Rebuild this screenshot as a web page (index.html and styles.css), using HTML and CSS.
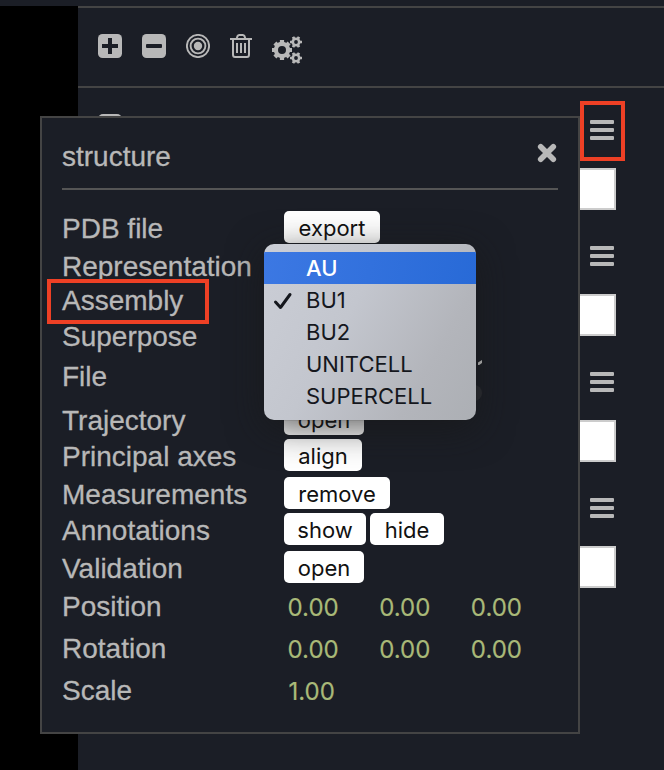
FILE: index.html
```html
<!DOCTYPE html>
<html lang="en">
<head>
<meta charset="utf-8">
<title>Structure</title>
<link rel="stylesheet" href="styles.css">
</head>
<body>
<header class="topbar"></header>
<main class="workspace">
  <div class="viewport"></div>
  <aside class="sidebar">
    <div class="toolbar">
      <svg class="tool" width="24" height="24" viewBox="0 0 24 24"><rect width="24" height="24" rx="4.5" fill="currentColor"/><path d="M12 4v16M4 12h16" stroke="#1b1e26" stroke-width="4"/></svg>
      <svg class="tool" width="24" height="24" viewBox="0 0 24 24"><rect width="24" height="24" rx="4.5" fill="currentColor"/><rect x="4" y="10" width="16" height="4" rx="1" fill="#1b1e26"/></svg>
      <svg class="tool" width="24" height="24" viewBox="0 0 24 24" fill="none" stroke="currentColor" stroke-width="1.9"><circle cx="12" cy="12" r="11.1"/><circle cx="12" cy="12" r="7.4"/><circle cx="12" cy="12" r="4.2" fill="currentColor" stroke="none"/></svg>
      <svg class="tool" width="22" height="24" viewBox="0 0 22 24" fill="none" stroke="currentColor" stroke-width="2"><path d="M0 5h22M6.5 5 7.6 2q.5-1 1.6-1h3.6q1.1 0 1.6 1L15.500 5M3 5v15.500q0 2.500 2 2.500h12q2 0 2-2.500V5M7 9v10M11 9v10M15 9v10"/></svg>
      <svg class="tool cogs" width="30" height="28" viewBox="0 0 30 28" fill="none" stroke="currentColor">
        <circle cx="10" cy="14" r="6.100" stroke-width="4.200"/>
        <path stroke-width="4.200" d="M10 4v4M10 20v4M0 14h4M16 14h4M2.900 6.900l3 3M14.100 18.100l3 3M2.900 21.100l3-3M14.100 9.900l3-3"/>
        <g id="small-cog"><circle cx="24" cy="6" r="3.200" stroke-width="2.600"/><path stroke-width="2.700" d="M18 6h2.500M27.500 6H30M21 .8l1.250 2.200M25.750 9l1.250 2.200M27 .8l-1.250 2.200M22.250 9 21 11.200"/></g>
        <use href="#small-cog" y="16"/>
      </svg>
    </div>
    <div class="components">
      <span class="expander"></span>
      <div class="component"><span class="bars"><i></i><i></i><i></i></span><span class="swatch"></span></div>
      <div class="component"><span class="bars"><i></i><i></i><i></i></span><span class="swatch"></span></div>
      <div class="component"><span class="bars"><i></i><i></i><i></i></span><span class="swatch"></span></div>
      <div class="component"><span class="bars"><i></i><i></i><i></i></span><span class="swatch"></span></div>
    </div>
  </aside>
</main>

<section class="panel">
  <div class="panel-head">
    <h1>structure</h1>
    <svg class="close" width="20" height="20" viewBox="0 0 20 20"><path d="M3.700 3.700l12.600 12.600M16.300 3.700 3.700 16.300" stroke="currentColor" stroke-width="5.600" stroke-linecap="round"/></svg>
  </div>
  <div class="row h38"><label>PDB file</label><button class="w96">export</button></div>
  <div class="row h34"><label>Representation</label></div>
  <div class="row h36"><label>Assembly</label></div>
  <div class="row h40"><label>Superpose</label></div>
  <div class="row h44"><label>File</label><span class="track"></span><span class="control-edge"></span></div>
  <div class="row h36"><label>Trajectory</label><button class="w80">open</button></div>
  <div class="row h38"><label>Principal axes</label><button class="w78">align</button></div>
  <div class="row h36"><label>Measurements</label><button class="w106">remove</button></div>
  <div class="row h38"><label>Annotations</label><button class="w82">show</button><button class="w74">hide</button></div>
  <div class="row h38"><label>Validation</label><button class="w80">open</button></div>
  <div class="row h42"><label>Position</label><span class="num">0.00</span><span class="num">0.00</span><span class="num">0.00</span></div>
  <div class="row h42"><label>Rotation</label><span class="num">0.00</span><span class="num">0.00</span><span class="num">0.00</span></div>
  <div class="row h42"><label>Scale</label><span class="num">1.00</span></div>
</section>

<ul class="menu">
  <li class="active">AU</li>
  <li><svg class="check" width="20" height="18" viewBox="0 0 20 18"><path d="M2.500 10l5 5.500L17 2.500" fill="none" stroke="currentColor" stroke-width="3" stroke-linecap="round" stroke-linejoin="round"/></svg>BU1</li>
  <li>BU2</li>
  <li>UNITCELL</li>
  <li>SUPERCELL</li>
</ul>
<div class="mark mark-menu"></div>
<div class="mark mark-assembly"></div>
</body>
</html>
```
FILE: styles.css
```css
* { box-sizing: border-box; }
body {
  margin: 0;
  position: relative;
  width: 664px;
  height: 770px;
  overflow: hidden;
  display: flex;
  flex-direction: column;
  background: #1b1e26;
  color: #b8b8b8;
  font: 28px/32px "Liberation Sans", Arial, sans-serif;
}
svg { display: block; flex: none; }
.topbar { height: 6px; }
.workspace { flex: 1; display: flex; }
.viewport { width: 78px; background: #000; }
.sidebar { flex: 1; border-top: 2px solid #444; }
.toolbar {
  display: flex;
  align-items: flex-start;
  gap: 20px;
  height: 80px;
  padding: 26px 0 0 20px;
  border-bottom: 2px solid #444;
}
.cogs { margin-top: 2px; }
.components { position: relative; padding: 32px 48px 0 0; }
.expander {
  position: absolute;
  left: 20px;
  top: 26px;
  width: 24px;
  height: 24px;
  border-radius: 5px;
  background: #b8b8b8;
}
.component {
  display: flex;
  flex-direction: column;
  align-items: flex-end;
  gap: 28px;
  height: 126px;
}
.bars { display: flex; flex-direction: column; gap: 4px; margin-right: 2px; }
.bars i { width: 24px; height: 4px; border-radius: 1px; background: #b8b8b8; }
.swatch { width: 42px; height: 42px; background: #fff; border: 2px solid #ccc; }

.panel {
  position: absolute;
  left: 40px;
  top: 116px;
  width: 540px;
  height: 618px;
  padding: 0 20px;
  background: #1b1e26;
  border: 2px solid #444;
}
.panel-head {
  display: flex;
  justify-content: space-between;
  height: 72px;
  padding-top: 22px;
  margin-bottom: 21px;
  border-bottom: 2px solid #555;
}
h1 { margin: 1px 0 0; font: inherit; -webkit-text-stroke: .3px; }
.close { margin: 3px 1px 0 0; }
.row { display: flex; align-items: flex-start; }
.row label { width: 222px; padding-top: 2px; white-space: nowrap; -webkit-text-stroke: .3px; }
.h34 { height: 34px; }
.h36 { height: 36px; }
.h38 { height: 38px; }
.h40 { height: 40px; }
.h42 { height: 42px; }
.h44 { height: 44px; }
button {
  height: 32px;
  margin: 0 4px 0 0;
  padding: 2px 0 0;
  border: 0;
  border-radius: 5px;
  background: #fff;
  color: #111;
  font: 22px/30px Inter, sans-serif;
}
.w74 { width: 74px; }
.w78 { width: 78px; }
.w80 { width: 80px; }
.w82 { width: 82px; }
.w96 { width: 96px; }
.w106 { width: 106px; }
.num {
  width: 92px;
  padding: 3px 0 0 4.500px;
  color: #a9b978;
  font: 24px/32px Inter, sans-serif;
  -webkit-text-stroke: .2px;
}
.track {
  width: 198px;
  height: 16px;
  margin: 26px -4px 0 0;
  border-radius: 8px;
  background: #2c2e34;
}
.control-edge {
  width: 4px;
  height: 5px;
  margin-top: 1px;
  background: #ccc;
  clip-path: polygon(0 50%, 100% 0, 100% 60%, 30% 100%, 0 100%);
}

.menu {
  position: absolute;
  left: 264px;
  top: 244px;
  width: 212px;
  height: 176px;
  margin: 0;
  padding: 8px 0;
  overflow: hidden;
  list-style: none;
  border-radius: 10px;
  background: linear-gradient(120deg, #cbced6 0%, #c3c6ce 40%, #b3b5bb 75%, #acafb4 100%);
  box-shadow: 0 8px 36px rgba(24, 24, 24, .7), 0 0 1px #222;
  color: #15171d;
  font: 22px/32px Inter, sans-serif;
}
.menu li { position: relative; height: 32px; padding-left: 42px; }
.menu .active { background: linear-gradient(100deg, #3c78e3, #286ad7); color: #fff; font-weight: 500; }
.check { position: absolute; left: 9px; top: 8px; }

.mark { position: absolute; border: 4px solid #ee4025; }
.mark-menu { left: 580px; top: 101px; width: 45px; height: 60px; }
.mark-assembly { left: 47px; top: 279px; width: 162px; height: 45px; }
```
